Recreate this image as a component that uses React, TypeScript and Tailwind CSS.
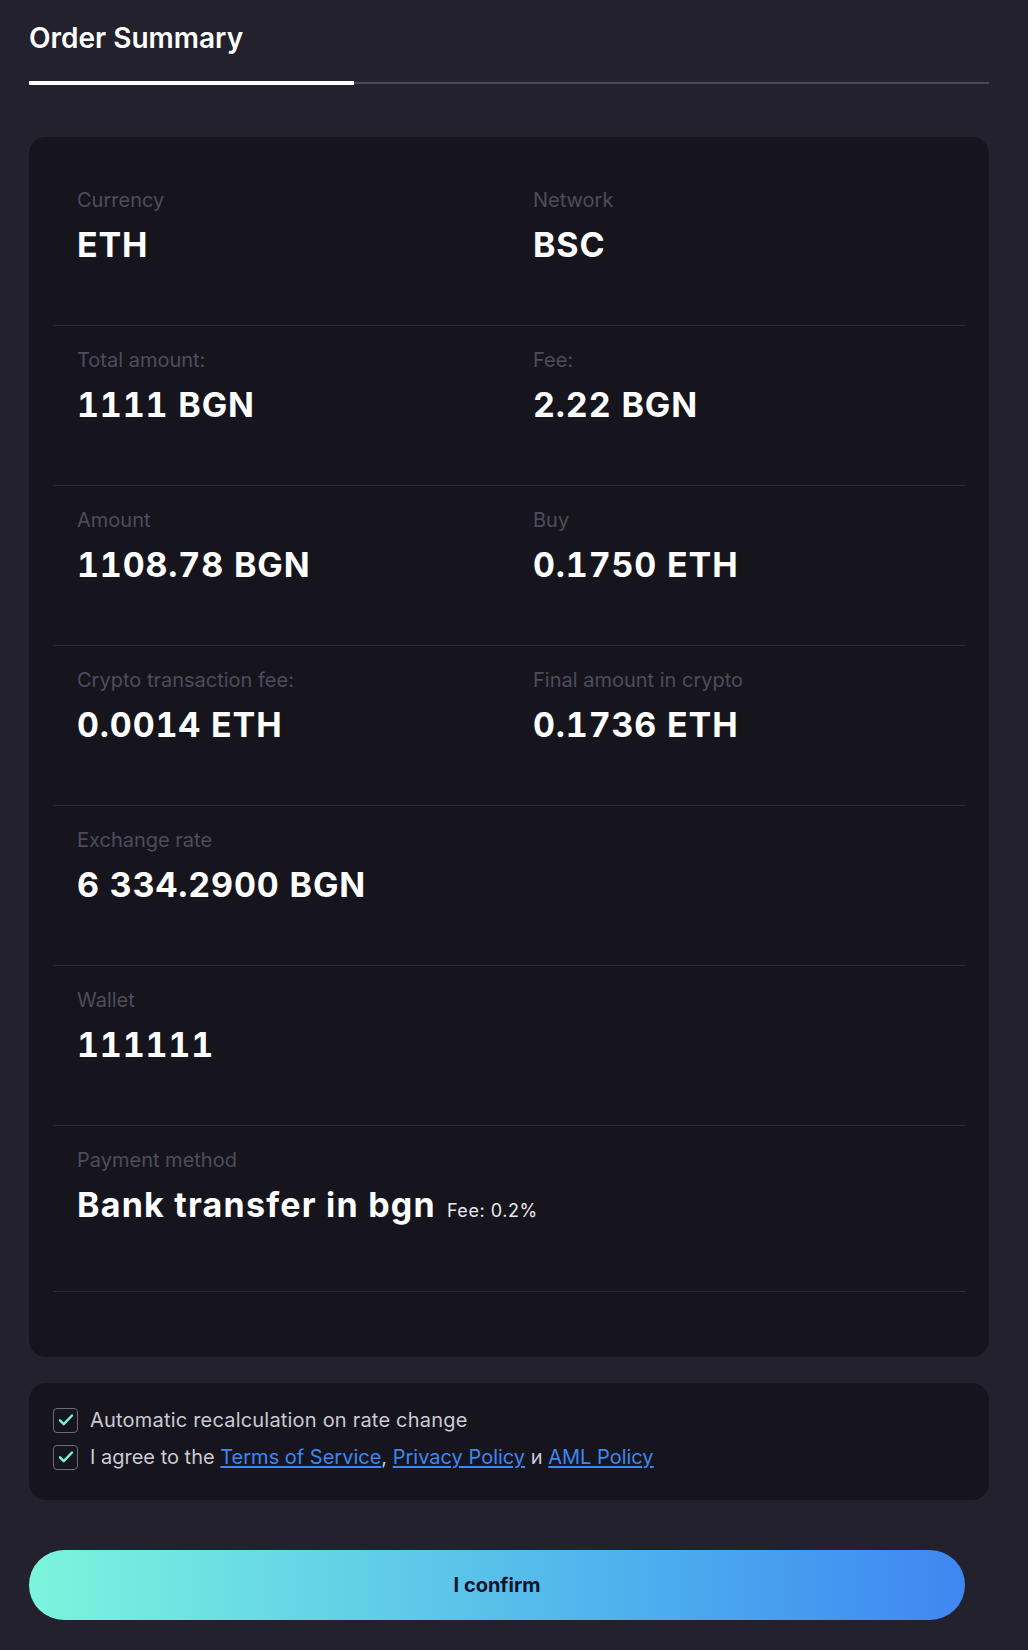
import React from "react";

function Check() {
  return (
    <span className="flex h-[25px] w-[25px] shrink-0 items-center justify-center rounded-[4px] border border-[#6b6a75]">
      <svg width="18" height="18" viewBox="0 0 24 24" fill="none">
        <path d="M4 12.5l5 5L20 6" stroke="#7af5dc" strokeWidth="3.2" strokeLinecap="round" strokeLinejoin="round" />
      </svg>
    </span>
  );
}

function Cell({ label, value }: { label: string; value: React.ReactNode }) {
  return (
    <div className="pl-[24px]">
      <div className="text-[20px] leading-[24px] text-[#4e4c5b]">{label}</div>
      <div className="mt-[13px] text-[34px] font-bold leading-[40px] tracking-[0.025em] text-white tabular-nums">{value}</div>
    </div>
  );
}

function Row({ children, h = "h-[160px]", cols = true }: { children: React.ReactNode; h?: string; cols?: boolean }) {
  return (
    <div className={`${h} border-b border-[#2b2a35] pt-[22px] ${cols ? "grid grid-cols-2" : ""}`}>{children}</div>
  );
}

export default function App() {
  return (
    <div className="min-h-[1650px] bg-[#23212e] pl-[29px] pr-[39px] pt-[21px] pb-[32px] font-['Inter',sans-serif]">
      <h1 className="text-[28px] font-semibold leading-[34px] text-white">Order Summary</h1>
      <div className="mt-[26px] flex h-[4px] items-center">
        <div className="h-[4px] w-[325px] bg-white" />
        <div className="h-[2px] flex-1 bg-[#4a4855]" />
      </div>

      <div className="mt-[52px] rounded-[17px] bg-[#16151e] px-[24px] pt-[29px] pb-[65px]">
        <Row h="h-[160px]">
          <Cell label="Currency" value="ETH" />
          <Cell label="Network" value="BSC" />
        </Row>
        <Row>
          <Cell label="Total amount:" value="1111 BGN" />
          <Cell label="Fee:" value="2.22 BGN" />
        </Row>
        <Row>
          <Cell label="Amount" value="1108.78 BGN" />
          <Cell label="Buy" value="0.1750 ETH" />
        </Row>
        <Row>
          <Cell label="Crypto transaction fee:" value="0.0014 ETH" />
          <Cell label="Final amount in crypto" value="0.1736 ETH" />
        </Row>
        <Row>
          <Cell label="Exchange rate" value="6 334.2900 BGN" />
        </Row>
        <Row>
          <Cell label="Wallet" value="111111" />
        </Row>
        <Row h="h-[166px]" cols={false}>
          <div className="pl-[24px]">
            <div className="text-[20px] leading-[24px] text-[#4e4c5b]">Payment method</div>
            <div className="mt-[13px] flex items-baseline gap-[11px]">
              <span className="text-[34px] font-bold leading-[40px] tracking-[0.036em] text-white">Bank transfer in bgn</span>
              <span className="text-[18px] tracking-[0.03em] text-[#e8e8ec]">Fee: 0.2%</span>
            </div>
          </div>
        </Row>
      </div>

      <div className="mt-[26px] flex flex-col gap-[9px] rounded-[17px] bg-[#16151e] px-[24px] pt-[23px] pb-[29px]">
        <div className="flex h-[28px] items-center gap-[12px]">
          <Check />
          <span className="text-[20px] leading-[28px] tracking-[0.01em] text-[#cbcad2]">Automatic recalculation on rate change</span>
        </div>
        <div className="flex h-[28px] items-center gap-[12px]">
          <Check />
          <span className="text-[20px] leading-[28px] text-[#cbcad2]">
            I agree to the <a className="text-[#3f86f2] underline underline-offset-2" href="#">Terms of Service</a>,{" "}
            <a className="text-[#3f86f2] underline underline-offset-2" href="#">Privacy Policy</a> и{" "}
            <a className="text-[#3f86f2] underline underline-offset-2" href="#">AML Policy</a>
          </span>
        </div>
      </div>

      <button className="mt-[50px] flex h-[70px] w-[936px] items-center justify-center rounded-full bg-gradient-to-r from-[#7bf5dc] to-[#3f86f2] text-[20px] font-bold text-[#15122c]">
        I confirm
      </button>
    </div>
  );
}
